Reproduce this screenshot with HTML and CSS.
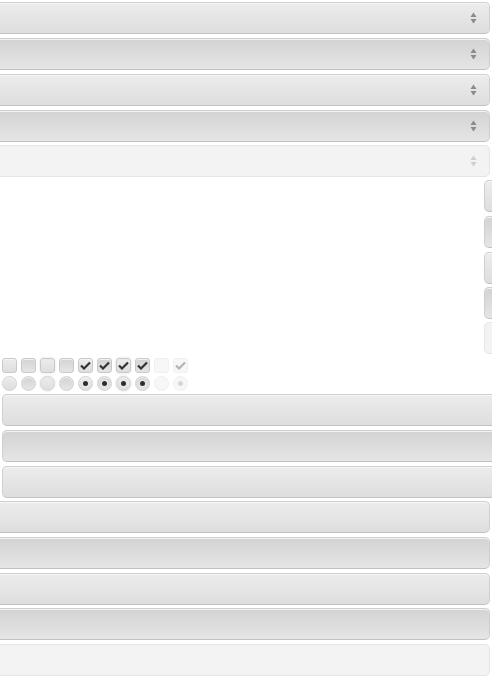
FILE: index.html
```html
<!DOCTYPE html>
<html>
<head>
<meta charset="utf-8">
<link rel="stylesheet" href="styles.css">
</head>
<body>
<div class="page">
  <div class="selects">
    <div class="ctl sel up"><svg class="arrows" width="7" height="12" viewBox="0 0 7 12"><path d="M3.5 0.5 L6.5 5 L0.5 5 Z M0.5 7 L6.5 7 L3.5 11.5 Z"/></svg></div>
    <div class="ctl sel down"><svg class="arrows" width="7" height="12" viewBox="0 0 7 12"><path d="M3.5 0.5 L6.5 5 L0.5 5 Z M0.5 7 L6.5 7 L3.5 11.5 Z"/></svg></div>
    <div class="ctl sel up"><svg class="arrows" width="7" height="12" viewBox="0 0 7 12"><path d="M3.5 0.5 L6.5 5 L0.5 5 Z M0.5 7 L6.5 7 L3.5 11.5 Z"/></svg></div>
    <div class="ctl sel down"><svg class="arrows" width="7" height="12" viewBox="0 0 7 12"><path d="M3.5 0.5 L6.5 5 L0.5 5 Z M0.5 7 L6.5 7 L3.5 11.5 Z"/></svg></div>
    <div class="ctl sel dis last"><svg class="arrows faint" width="7" height="12" viewBox="0 0 7 12"><path d="M3.5 0.5 L6.5 5 L0.5 5 Z M0.5 7 L6.5 7 L3.5 11.5 Z"/></svg></div>
  </div>

  <div class="side">
    <div class="ctl sbtn up"></div>
    <div class="ctl sbtn down"></div>
    <div class="ctl sbtn up"></div>
    <div class="ctl sbtn down tight"></div>
    <div class="ctl sbtn dis tight"></div>
  </div>

  <div class="checks">
    <span class="box up"></span>
    <span class="box down"></span>
    <span class="box up glow"></span>
    <span class="box down"></span>
    <span class="box up"><svg class="tick" width="11" height="9" viewBox="0 0 11 9"><path d="M1 4.5 L4 7.5 L10 1.5"/></svg></span>
    <span class="box down"><svg class="tick" width="11" height="9" viewBox="0 0 11 9"><path d="M1 4.5 L4 7.5 L10 1.5"/></svg></span>
    <span class="box up glow"><svg class="tick" width="11" height="9" viewBox="0 0 11 9"><path d="M1 4.5 L4 7.5 L10 1.5"/></svg></span>
    <span class="box down"><svg class="tick" width="11" height="9" viewBox="0 0 11 9"><path d="M1 4.5 L4 7.5 L10 1.5"/></svg></span>
    <span class="box dis"></span>
    <span class="box dis"><svg class="tick faint" width="11" height="9" viewBox="0 0 11 9"><path d="M1 4.5 L4 7.5 L10 1.5"/></svg></span>
  </div>
  <div class="checks radios">
    <span class="box round up"></span>
    <span class="box round down"></span>
    <span class="box round up glow"></span>
    <span class="box round down"></span>
    <span class="box round up"><span class="dot"></span></span>
    <span class="box round down"><span class="dot"></span></span>
    <span class="box round up glow"><span class="dot"></span></span>
    <span class="box round down"><span class="dot"></span></span>
    <span class="box round dis"></span>
    <span class="box round dis"><span class="dot faintdot"></span></span>
  </div>

  <div class="wides">
    <div class="ctl wbtn up"></div>
    <div class="ctl wbtn down"></div>
    <div class="ctl wbtn up"></div>
  </div>

  <div class="fulls">
    <div class="ctl fbtn up"></div>
    <div class="ctl fbtn down"></div>
    <div class="ctl fbtn up"></div>
    <div class="ctl fbtn down tight"></div>
    <div class="ctl fbtn dis"></div>
  </div>
</div>
</body>
</html>
```

FILE: styles.css
```css
html, body {
  margin: 0;
  padding: 0;
  background: #ffffff;
  overflow: hidden;
  font-family: "Liberation Sans", Arial, sans-serif;
}
.page {
  width: 492px;
  height: 677px;
  overflow: hidden;
  padding-top: 2px;
  box-sizing: border-box;
}
.ctl {
  box-sizing: border-box;
  height: 32px;
  border: 1px solid #cfcfcf;
  border-bottom-color: #c2c2c2;
  border-radius: 5px;
}
.up {
  background: linear-gradient(#ececec, #dedede);
  box-shadow: inset 0 1px 0 #f6f6f6;
}
.down {
  background: linear-gradient(#d3d3d3, #e5e5e5);
  box-shadow: inset 0 1px 0 #f2f2f2;
}
.dis {
  background: #f3f3f3;
  border-color: #e6e6e6;
  box-shadow: none;
}
.tight { margin-top: -1px; }

.selects {
  display: flex;
  flex-direction: column;
  gap: 4px;
  margin-left: -10px;
  width: 500px;
}
.sel {
  display: flex;
  align-items: center;
  justify-content: flex-end;
  padding-right: 12px;
}
.sel.last { margin-top: -1px; }
.arrows { fill: #8a8a8a; display: block; }
.arrows.faint { fill: #cfcfcf; }

.side {
  display: flex;
  flex-direction: column;
  align-items: flex-end;
  gap: 4px;
  margin-top: 3px;
}
.sbtn {
  width: 40px;
  margin-right: -32px;
}

.checks {
  display: flex;
  gap: 4px;
  margin-top: 4px;
  padding-left: 2px;
}
.checks.radios { margin-top: 3px; }
.box {
  box-sizing: border-box;
  width: 15px;
  height: 15px;
  border: 1px solid #c9c9c9;
  border-radius: 3px;
  display: flex;
  align-items: center;
  justify-content: center;
}
.box.glow { box-shadow: 0 0 3px #e2e2e2; }
.box.dis { border-color: #f0f0f0; background: #f7f7f7; }
.tick {
  fill: none;
  stroke: #333;
  stroke-width: 2.2;
  display: block;
}
.tick.faint { stroke: #b5b5b5; }
.round {
  border-radius: 50%;
  border-color: #d2d2d2;
}
.dot {
  width: 5px;
  height: 5px;
  border-radius: 50%;
  background: #2e2e2e;
  box-shadow: 0 0 0 1.5px #e8e8e8;
}
.dot.faintdot { background: #d6d6d6; box-shadow: none; }

.wides {
  display: flex;
  flex-direction: column;
  gap: 4px;
  margin-top: 3px;
  margin-left: 2px;
}
.wbtn { width: 520px; }

.fulls {
  display: flex;
  flex-direction: column;
  gap: 4px;
  margin-top: 3px;
  margin-left: -10px;
  width: 500px;
}
```
